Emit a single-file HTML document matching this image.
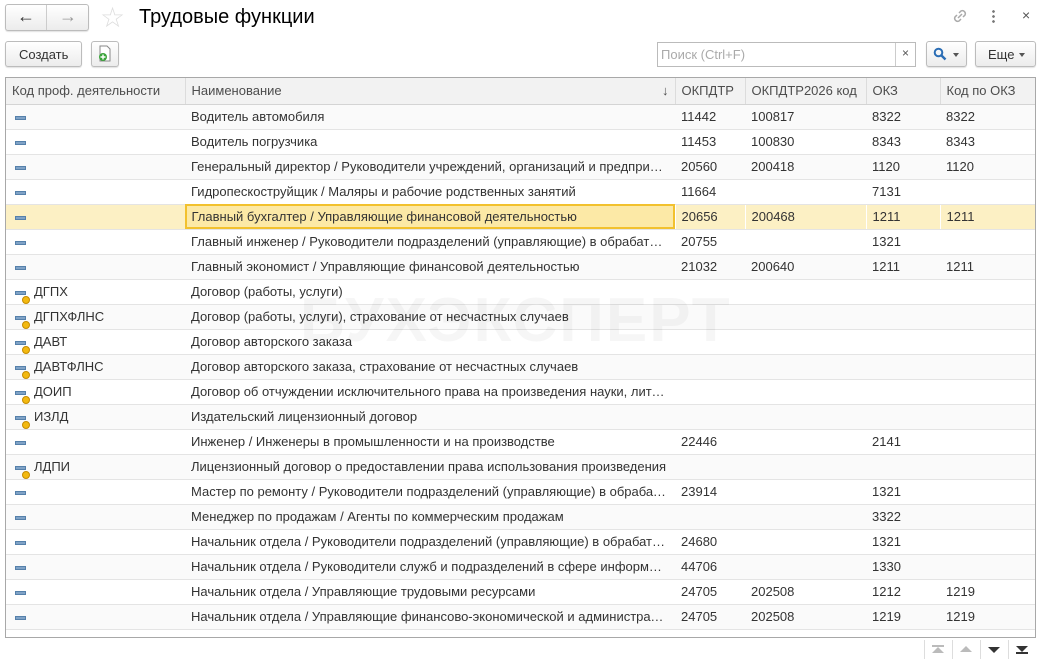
<!DOCTYPE html>
<html><head><meta charset="utf-8"><style>
*{box-sizing:border-box;margin:0;padding:0}
body{width:1040px;height:659px;background:#fff;font-family:"Liberation Sans",Arial,sans-serif;font-size:13px;color:#333;position:relative;overflow:hidden}
.abs{position:absolute}
.btn{position:absolute;border:1px solid #bcbcbc;border-radius:3px;background:linear-gradient(#fff,#ececec);box-shadow:0 1px 1px rgba(0,0,0,.12)}
table{position:absolute;left:6px;top:78px;width:1029px;border-collapse:collapse;table-layout:fixed}
td,th{height:25px;padding:0 6px;white-space:nowrap;overflow:hidden;text-overflow:ellipsis;font-weight:normal;text-align:left;border-bottom:1px solid #e4e4e4}
th{background:#f2f2f2;color:#4d4d4d;border-right:1px solid #dcdcdc;border-bottom:1px solid #d4d4d4;height:26px}
tr:nth-child(even) td{background:#fafafa}
tr.sel td{background:#fcf0c4;border-right:1px solid #fff}
tr.sel td.cur{outline:2px solid #f2c12e;outline-offset:-2px;background:#fce9a6}
td.k{position:relative;padding-left:28px}
.ic{position:absolute;left:9px;top:11px;width:11px;height:4px;background:#7fa2c6;border:1px solid #5580aa}
.ic.y::after{content:"";position:absolute;left:6px;top:4px;width:6px;height:6px;border-radius:50%;background:#f3b90f;border:1px solid #c58b00}
</style></head><body>
<div class="btn" style="left:5px;top:4px;width:84px;height:27px"></div>
<div class="abs" style="left:46px;top:5px;width:1px;height:25px;background:#ccc"></div>
<div class="abs" style="left:17px;top:6px;font-size:18px;color:#333">&#8592;</div>
<div class="abs" style="left:59px;top:6px;font-size:18px;color:#999">&#8594;</div>
<div class="abs" style="left:100px;top:1px;font-size:28px;color:#ddd">&#9734;</div>
<div class="abs" style="left:139px;top:6px;font-size:20px;color:#000">Трудовые функции</div>
<svg class="abs" style="left:950px;top:6px" width="20" height="20" viewBox="0 0 20 20"><g fill="none" stroke="#aaa" stroke-width="1.5"><path d="M8 12 L12 8"/><path d="M9 7 L11 5 a3 3 0 0 1 4 4 L13 11"/><path d="M11 13 L9 15 a3 3 0 0 1 -4 -4 L7 9"/></g></svg>
<div class="abs" style="left:992px;top:9px;width:3px;height:14px;background:radial-gradient(circle,#777 1.2px,transparent 1.5px) 0 0/3px 5px"></div>
<div class="abs" style="left:1022px;top:7px;font-size:14px;color:#555">×</div>

<div class="btn" style="left:5px;top:41px;width:77px;height:26px"></div>
<div class="abs" style="left:19px;top:47px;color:#333">Создать</div>
<div class="btn" style="left:91px;top:41px;width:28px;height:26px"></div>
<svg class="abs" style="left:97px;top:45px" width="16" height="18"><path d="M3 1h7l3 3v12H3z" fill="#fff" stroke="#888"/><circle cx="6" cy="12" r="4" fill="#3aa33a"/><path d="M6 9.5v5M3.5 12h5" stroke="#fff" stroke-width="1.4"/></svg>

<div class="abs" style="left:657px;top:42px;width:259px;height:25px;border:1px solid #bbb;background:#fff"></div>
<div class="abs" style="left:895px;top:43px;width:1px;height:23px;background:#ccc"></div>
<div class="abs" style="left:661px;top:47px;color:#aaa">Поиск (Ctrl+F)</div>
<div class="abs" style="left:902px;top:46px;font-size:12px;color:#555">×</div>
<div class="btn" style="left:926px;top:41px;width:41px;height:26px"></div>
<svg class="abs" style="left:933px;top:47px" width="14" height="14"><circle cx="5.5" cy="5.5" r="3.8" fill="none" stroke="#2a6db5" stroke-width="2"/><path d="M8.5 8.5l4 4" stroke="#2a6db5" stroke-width="2.4"/></svg>
<div class="abs" style="left:953px;top:53px;border:3px solid transparent;border-top:4px solid #555"></div>
<div class="btn" style="left:975px;top:41px;width:61px;height:26px"></div>
<div class="abs" style="left:988px;top:47px">Еще</div>
<div class="abs" style="left:1019px;top:53px;border:3px solid transparent;border-top:4px solid #555"></div>

<table>
<colgroup><col style="width:179px"><col style="width:490px"><col style="width:70px"><col style="width:121px"><col style="width:74px"><col style="width:95px"></colgroup>
<tr><th>Код проф. деятельности</th><th>Наименование<span style="float:right">&#8595;</span></th><th>ОКПДТР</th><th>ОКПДТР2026 код</th><th>ОКЗ</th><th>Код по ОКЗ</th></tr>
<tr><td class="k"><span class="ic"></span></td><td>Водитель автомобиля</td><td>11442</td><td>100817</td><td>8322</td><td>8322</td></tr>
<tr><td class="k"><span class="ic"></span></td><td>Водитель погрузчика</td><td>11453</td><td>100830</td><td>8343</td><td>8343</td></tr>
<tr><td class="k"><span class="ic"></span></td><td>Генеральный директор / Руководители учреждений, организаций и предприятий</td><td>20560</td><td>200418</td><td>1120</td><td>1120</td></tr>
<tr><td class="k"><span class="ic"></span></td><td>Гидропескоструйщик / Маляры и рабочие родственных занятий</td><td>11664</td><td></td><td>7131</td><td></td></tr>
<tr class="sel"><td class="k"><span class="ic"></span></td><td class="cur">Главный бухгалтер / Управляющие финансовой деятельностью</td><td>20656</td><td>200468</td><td>1211</td><td>1211</td></tr>
<tr><td class="k"><span class="ic"></span></td><td>Главный инженер / Руководители подразделений (управляющие) в обрабатывающей</td><td>20755</td><td></td><td>1321</td><td></td></tr>
<tr><td class="k"><span class="ic"></span></td><td>Главный экономист / Управляющие финансовой деятельностью</td><td>21032</td><td>200640</td><td>1211</td><td>1211</td></tr>
<tr><td class="k"><span class="ic y"></span>ДГПХ</td><td>Договор (работы, услуги)</td><td></td><td></td><td></td><td></td></tr>
<tr><td class="k"><span class="ic y"></span>ДГПХФЛНС</td><td>Договор (работы, услуги), страхование от несчастных случаев</td><td></td><td></td><td></td><td></td></tr>
<tr><td class="k"><span class="ic y"></span>ДАВТ</td><td>Договор авторского заказа</td><td></td><td></td><td></td><td></td></tr>
<tr><td class="k"><span class="ic y"></span>ДАВТФЛНС</td><td>Договор авторского заказа, страхование от несчастных случаев</td><td></td><td></td><td></td><td></td></tr>
<tr><td class="k"><span class="ic y"></span>ДОИП</td><td>Договор об отчуждении исключительного права на произведения науки, литературы</td><td></td><td></td><td></td><td></td></tr>
<tr><td class="k"><span class="ic y"></span>ИЗЛД</td><td>Издательский лицензионный договор</td><td></td><td></td><td></td><td></td></tr>
<tr><td class="k"><span class="ic"></span></td><td>Инженер / Инженеры в промышленности и на производстве</td><td>22446</td><td></td><td>2141</td><td></td></tr>
<tr><td class="k"><span class="ic y"></span>ЛДПИ</td><td>Лицензионный договор о предоставлении права использования произведения</td><td></td><td></td><td></td><td></td></tr>
<tr><td class="k"><span class="ic"></span></td><td>Мастер по ремонту / Руководители подразделений (управляющие) в обрабатывающей</td><td>23914</td><td></td><td>1321</td><td></td></tr>
<tr><td class="k"><span class="ic"></span></td><td>Менеджер по продажам / Агенты по коммерческим продажам</td><td></td><td></td><td>3322</td><td></td></tr>
<tr><td class="k"><span class="ic"></span></td><td>Начальник отдела / Руководители подразделений (управляющие) в обрабатывающей</td><td>24680</td><td></td><td>1321</td><td></td></tr>
<tr><td class="k"><span class="ic"></span></td><td>Начальник отдела / Руководители служб и подразделений в сфере информационных</td><td>44706</td><td></td><td>1330</td><td></td></tr>
<tr><td class="k"><span class="ic"></span></td><td>Начальник отдела / Управляющие трудовыми ресурсами</td><td>24705</td><td>202508</td><td>1212</td><td>1219</td></tr>
<tr><td class="k"><span class="ic"></span></td><td>Начальник отдела / Управляющие финансово-экономической и административной</td><td>24705</td><td>202508</td><td>1219</td><td>1219</td></tr>
</table>
<div class="abs" style="left:300px;top:285px;font-size:62px;font-weight:bold;color:rgba(0,0,0,0.035);letter-spacing:2px">БУХЭКСПЕРТ</div>
<div class="abs" style="left:5px;top:77px;width:1031px;height:561px;border:1px solid #a8a8a8"></div>
<div class="abs" style="left:924px;top:640px;width:112px;height:19px;border-left:1px solid #ddd"></div>
<div class="abs" style="left:952px;top:640px;width:1px;height:19px;background:#ddd"></div>
<div class="abs" style="left:980px;top:640px;width:1px;height:19px;background:#ddd"></div>
<div class="abs" style="left:1008px;top:640px;width:1px;height:19px;background:#ddd"></div>
<div class="abs" style="left:932px;top:645px;width:12px;height:2px;background:#bbb"></div>
<div class="abs" style="left:932px;top:647px;border:6px solid transparent;border-bottom:6px solid #bbb;border-top:0"></div>
<div class="abs" style="left:960px;top:646px;border:6px solid transparent;border-bottom:6px solid #bbb;border-top:0"></div>
<div class="abs" style="left:988px;top:647px;border:6px solid transparent;border-top:6px solid #333;border-bottom:0"></div>
<div class="abs" style="left:1016px;top:646px;border:6px solid transparent;border-top:6px solid #333;border-bottom:0"></div>
<div class="abs" style="left:1016px;top:652px;width:12px;height:2px;background:#333"></div>
</body></html>
